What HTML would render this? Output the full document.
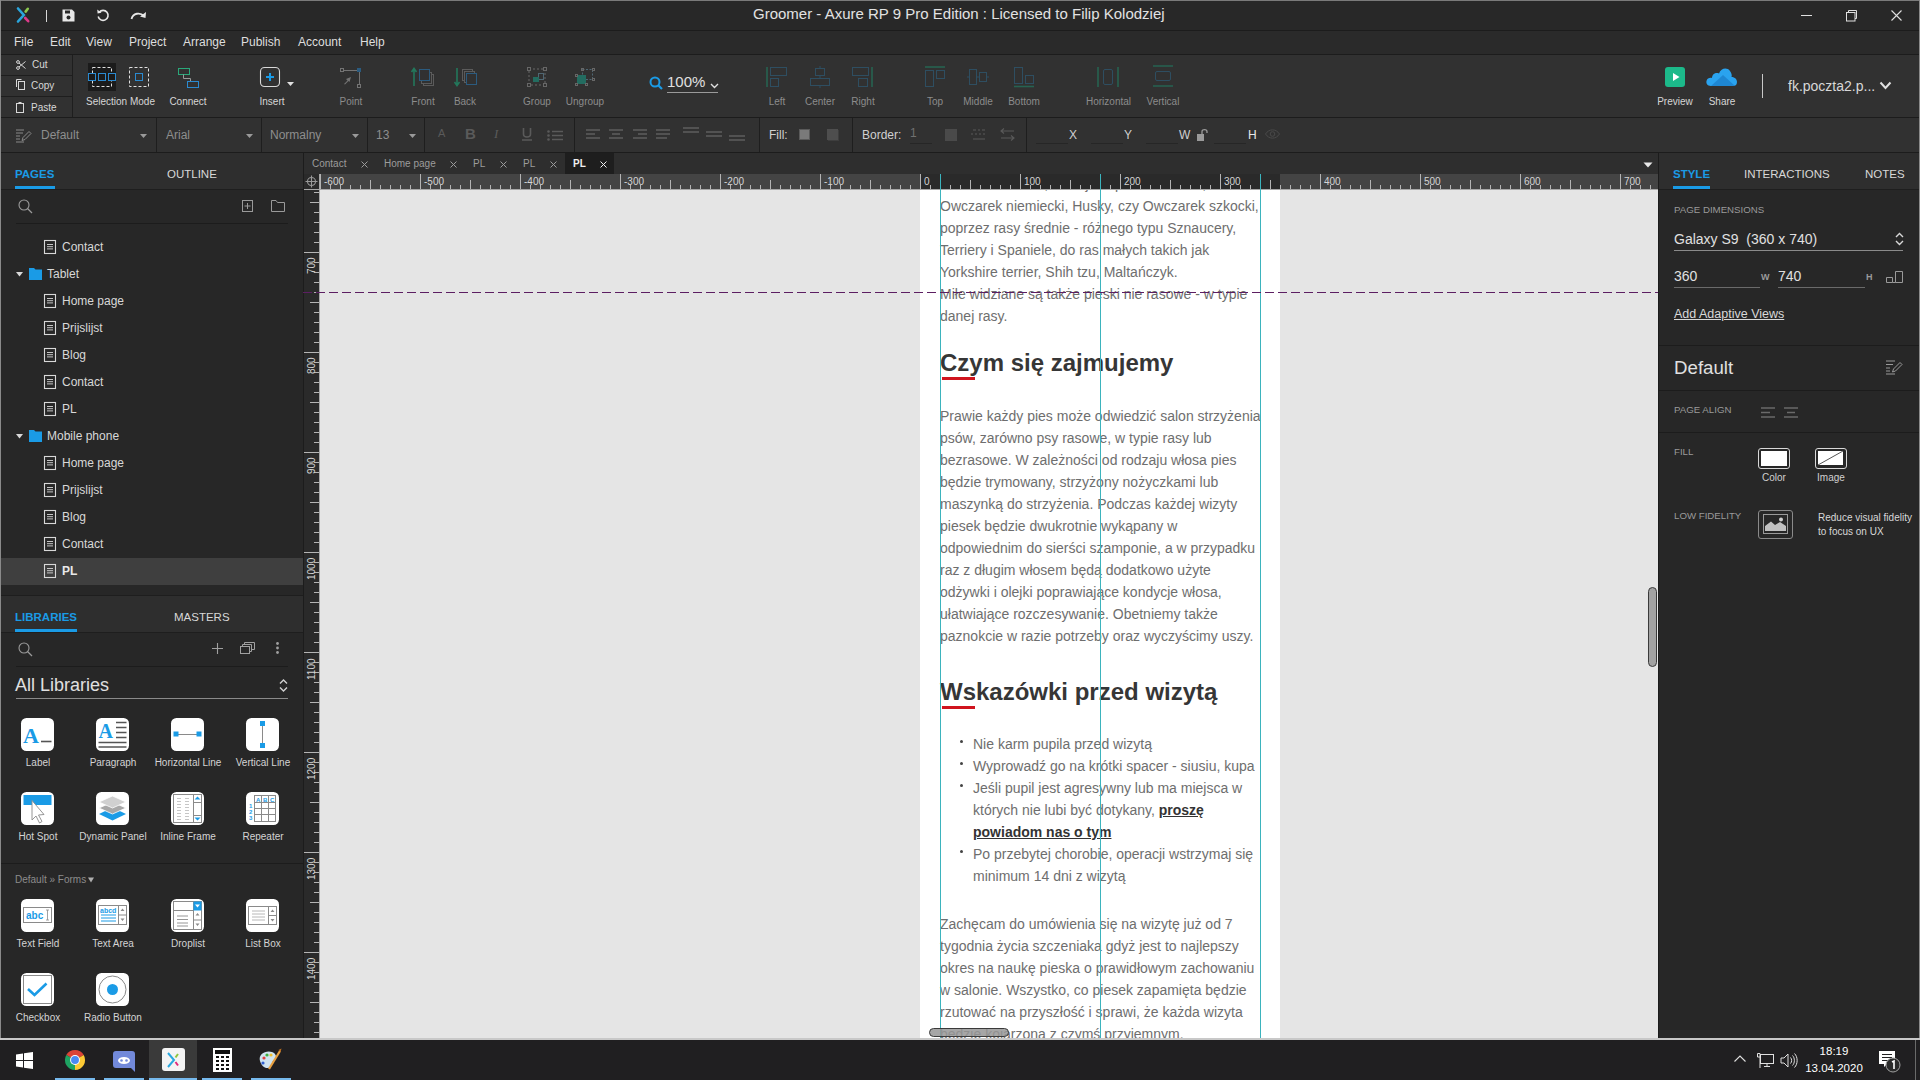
<!DOCTYPE html>
<html><head><meta charset="utf-8">
<style>
*{box-sizing:border-box;margin:0;padding:0}
html,body{width:1920px;height:1080px;overflow:hidden;background:#272727;font-family:"Liberation Sans",sans-serif;color:#d8d8d8}
.a{position:absolute}
.t{position:absolute;white-space:nowrap;line-height:1}
svg{position:absolute;overflow:visible}
</style></head><body>
<!-- window borders -->
<div class="a" style="left:0;top:0;width:1920px;height:1px;background:#7a7a7a"></div>
<div class="a" style="left:0;top:0;width:1px;height:1040px;background:#8a8a8a"></div>
<div class="a" style="left:1919px;top:0;width:1px;height:1040px;background:#8a8a8a"></div>
<!-- title bar -->
<div class="a" style="left:1px;top:1px;width:1918px;height:29px;background:#282828"></div>
<div class="a" style="left:1px;top:30px;width:1918px;height:1px;background:#1c1c1c"></div>
<!-- menu bar -->
<div class="a" style="left:1px;top:31px;width:1918px;height:23px;background:#2a2a2a"></div>
<div class="a" style="left:1px;top:54px;width:1918px;height:1px;background:#1c1c1c"></div>
<!-- toolbar -->
<div class="a" style="left:1px;top:55px;width:1918px;height:62px;background:#313131"></div>
<div class="a" style="left:1px;top:117px;width:1918px;height:1px;background:#1c1c1c"></div>
<!-- format bar -->
<div class="a" style="left:1px;top:118px;width:1918px;height:34px;background:#313131"></div>
<div class="a" style="left:1px;top:152px;width:1918px;height:1px;background:#1c1c1c"></div>
<!-- left panel -->
<div class="a" style="left:1px;top:153px;width:302px;height:885px;background:#272727"></div>
<div class="a" style="left:303px;top:153px;width:1px;height:885px;background:#1c1c1c"></div>
<!-- right panel -->
<div class="a" style="left:1658px;top:153px;width:1px;height:885px;background:#1c1c1c"></div>
<div class="a" style="left:1659px;top:153px;width:260px;height:885px;background:#272727"></div>
<!-- canvas region -->
<div class="a" style="left:304px;top:153px;width:1354px;height:21px;background:#2e2e2e"></div>
<div class="a" style="left:320px;top:190px;width:1338px;height:848px;background:#e5e5e5"></div>
<div class="a" style="left:920px;top:190px;width:360px;height:848px;background:#ffffff"></div>
<!-- bottom window border -->
<div class="a" style="left:0;top:1038px;width:1920px;height:2px;background:#c8c8c8"></div>
<!-- taskbar -->
<div class="a" style="left:0;top:1040px;width:1920px;height:40px;background:#201f21"></div>

<!-- ===== TITLE BAR ===== -->
<svg style="left:0px;top:0px" width="40" height="30" viewBox="0 0 40 30"><path d="M18 8.5 L23.8 15 L18 21.5" stroke="#2aa5dc" stroke-width="2.6" fill="none" stroke-linecap="round"/><path d="M25.6 11.6 L27.8 8.8" stroke="#8cc850" stroke-width="2.6" stroke-linecap="round"/><path d="M25.2 18 L28.2 21.2" stroke="#dc3a8a" stroke-width="2.6" stroke-linecap="round"/></svg>
<div class="a" style="left:46px;top:10px;width:1px;height:12px;background:#d8d8d8"></div>
<svg style="left:62px;top:9px" width="13" height="13" viewBox="0 0 13 13">
 <path d="M0.5 0.5 H10 L12.5 3 V12.5 H0.5 Z" fill="#e8e8e8"/>
 <rect x="3" y="1.5" width="5" height="3" fill="#282828"/>
 <circle cx="6.5" cy="8.5" r="2" fill="#282828"/>
</svg>
<svg style="left:96px;top:8px" width="14" height="14" viewBox="0 0 14 14">
 <path d="M3.2 4.2 A5 5 0 1 1 2.2 8.5" stroke="#e8e8e8" stroke-width="1.6" fill="none"/>
 <path d="M1.2 1.5 L1.6 5.5 L5.5 4.8 Z" fill="#e8e8e8"/>
</svg>
<svg style="left:130px;top:9px" width="17" height="12" viewBox="0 0 17 12">
 <path d="M1.5 10 C3 4, 10 3, 14 7" stroke="#e8e8e8" stroke-width="1.8" fill="none"/>
 <path d="M16 3 L15.5 9 L10 7.5 Z" fill="#e8e8e8"/>
</svg>
<div class="t" style="left:753px;top:6px;font-size:15px;line-height:16px;color:#e2e2e2">Groomer - Axure RP 9 Pro Edition : Licensed to Filip Kolodziej</div>
<div class="a" style="left:1801px;top:15px;width:11px;height:1px;background:#e0e0e0"></div>
<svg style="left:1845px;top:9px" width="13" height="13" viewBox="0 0 13 13"><rect x="1.5" y="3.5" width="8.5" height="8.5" stroke="#e0e0e0" stroke-width="1" fill="none"/><path d="M3.5 3.5 V1.5 H11.5 V9.5 H10" stroke="#e0e0e0" stroke-width="1" fill="none"/></svg>
<svg style="left:1891px;top:10px" width="11" height="11" viewBox="0 0 11 11">
 <path d="M0.5 0.5 L10.5 10.5 M10.5 0.5 L0.5 10.5" stroke="#e0e0e0" stroke-width="1.1"/>
</svg>
<!-- ===== MENU BAR ===== -->
<div class="t" style="left:14px;top:36px;font-size:12px;line-height:12px;color:#dedede">File</div>
<div class="t" style="left:50px;top:36px;font-size:12px;line-height:12px;color:#dedede">Edit</div>
<div class="t" style="left:86px;top:36px;font-size:12px;line-height:12px;color:#dedede">View</div>
<div class="t" style="left:129px;top:36px;font-size:12px;line-height:12px;color:#dedede">Project</div>
<div class="t" style="left:183px;top:36px;font-size:12px;line-height:12px;color:#dedede">Arrange</div>
<div class="t" style="left:241px;top:36px;font-size:12px;line-height:12px;color:#dedede">Publish</div>
<div class="t" style="left:298px;top:36px;font-size:12px;line-height:12px;color:#dedede">Account</div>
<div class="t" style="left:360px;top:36px;font-size:12px;line-height:12px;color:#dedede">Help</div>

<!-- ===== TOOLBAR ===== -->
<div class="a" style="left:72px;top:55px;width:1px;height:62px;background:#1e1e1e"></div>
<div class="a" style="left:1px;top:75px;width:71px;height:1px;background:#1e1e1e"></div>
<div class="a" style="left:1px;top:96px;width:71px;height:1px;background:#1e1e1e"></div>
<svg style="left:16px;top:60px" width="10" height="10" viewBox="0 0 10 10">
 <circle cx="2" cy="2" r="1.4" stroke="#d8d8d8" fill="none"/><circle cx="2" cy="8" r="1.4" stroke="#d8d8d8" fill="none"/>
 <path d="M3 3 L9.5 8.5 M3 7 L9.5 1.5" stroke="#d8d8d8" stroke-width="1"/>
</svg>
<div class="t" style="left:32px;top:60px;font-size:10px;line-height:10px;color:#d8d8d8">Cut</div>
<svg style="left:16px;top:79px" width="9" height="11" viewBox="0 0 9 11">
 <path d="M0.5 0.5 H5.5 M0.5 0.5 V8" stroke="#d8d8d8" fill="none"/><rect x="2.5" y="2.5" width="6" height="8" stroke="#d8d8d8" fill="none"/>
</svg>
<div class="t" style="left:31px;top:81px;font-size:10px;line-height:10px;color:#d8d8d8">Copy</div>
<svg style="left:16px;top:102px" width="9" height="11" viewBox="0 0 9 11">
 <rect x="0.5" y="1.5" width="7" height="9" stroke="#d8d8d8" fill="none"/><rect x="2.5" y="0" width="3" height="2" fill="#d8d8d8"/>
</svg>
<div class="t" style="left:31px;top:103px;font-size:10px;line-height:10px;color:#d8d8d8">Paste</div>

<div class="a" style="left:88px;top:63px;width:28px;height:28px;background:#1b1b1b"></div>
<svg style="left:88px;top:63px" width="28" height="28" viewBox="0 0 28 28">
 <rect x="4.5" y="4.5" width="19" height="19" stroke="#e0e0e0" stroke-dasharray="3 2" fill="none"/>
 <rect x="0.5" y="10.5" width="7" height="7" stroke="#2a8ad0" fill="#1b1b1b"/>
 <rect x="10.5" y="10.5" width="7" height="7" stroke="#2a8ad0" fill="#1b1b1b"/>
 <rect x="20.5" y="10.5" width="7" height="7" stroke="#2a8ad0" fill="#1b1b1b"/>
</svg>
<svg style="left:129px;top:67px" width="21" height="21" viewBox="0 0 21 21">
 <rect x="0.5" y="0.5" width="19" height="19" stroke="#e0e0e0" stroke-dasharray="3 2" fill="none"/>
 <rect x="6.5" y="6.5" width="7" height="7" stroke="#2a8ad0" fill="none"/>
</svg>
<svg style="left:178px;top:67px" width="21" height="21" viewBox="0 0 21 21">
 <rect x="0.5" y="1.5" width="11" height="6" stroke="#2aa87a" fill="none"/>
 <path d="M5.5 7.5 V11.5 H12.5 V14.5" stroke="#9a9a9a" fill="none"/>
 <rect x="9.5" y="14.5" width="11" height="6" stroke="#2a8ad0" fill="none"/>
</svg>
<svg style="left:259px;top:66px" width="37" height="22" viewBox="0 0 37 22">
 <rect x="1.5" y="1.5" width="19" height="19" rx="4" stroke="#d8d8d8" stroke-width="1.1" fill="none"/>
 <path d="M11 7 V15 M7 11 H15" stroke="#1a9be6" stroke-width="2"/>
 <path d="M28 16 H35 L31.5 20 Z" fill="#e0e0e0"/>
</svg>
<svg style="left:340px;top:67px;opacity:0.75" width="22" height="21" viewBox="0 0 22 21">
 <rect x="0.5" y="1.5" width="3" height="3" stroke="#8a8a8a" fill="none"/>
 <path d="M3.5 3.5 H17" stroke="#8a8a8a"/>
 <rect x="17" y="1" width="4" height="4" fill="#2a6a9a"/>
 <path d="M19.5 5 V17" stroke="#8a8a8a"/>
 <rect x="17.5" y="17.5" width="3" height="3" stroke="#8a8a8a" fill="none"/>
 <path d="M4 17 L7.5 13.5 L6 12 L11 10 L9.5 15 L8.5 14 L5 17.5 Z" fill="#8a8a8a"/>
</svg>
<svg style="left:411px;top:67px;opacity:0.75" width="24" height="20" viewBox="0 0 24 20">
 <path d="M3 19 V2 M0.5 5 L3 1.5 L5.5 5" stroke="#1f8f6a" stroke-width="1.6" fill="none"/>
 <rect x="12.5" y="7.5" width="10" height="11" stroke="#6a6a6a" fill="none"/>
 <rect x="10.5" y="5.5" width="10" height="11" stroke="#6a6a6a" fill="#313131"/>
 <rect x="8.5" y="2.5" width="10" height="11" stroke="#2a6a9a" fill="#313131"/>
</svg>
<svg style="left:454px;top:67px;opacity:0.75" width="24" height="20" viewBox="0 0 24 20">
 <path d="M3 1 V18 M0.5 15 L3 18.5 L5.5 15" stroke="#1f8f6a" stroke-width="1.6" fill="none"/>
 <rect x="8.5" y="2.5" width="10" height="11" stroke="#6a6a6a" fill="none"/>
 <rect x="10.5" y="4.5" width="10" height="11" stroke="#6a6a6a" fill="#313131"/>
 <rect x="12.5" y="6.5" width="10" height="11" stroke="#2a6a9a" fill="#313131"/>
</svg>
<svg style="left:527px;top:67px;opacity:0.75" width="21" height="20" viewBox="0 0 21 20">
 <rect x="2" y="2" width="16" height="16" stroke="#7a7a7a" stroke-dasharray="2 2" fill="none"/>
 <rect x="0.5" y="0.5" width="3" height="3" stroke="#7a7a7a" fill="#313131"/><rect x="16.5" y="0.5" width="3" height="3" stroke="#7a7a7a" fill="#313131"/>
 <rect x="0.5" y="16.5" width="3" height="3" stroke="#7a7a7a" fill="#313131"/><rect x="16.5" y="16.5" width="3" height="3" stroke="#7a7a7a" fill="#313131"/>
 <rect x="11.5" y="6.5" width="5" height="6" stroke="#5a7a8a" fill="none"/>
 <rect x="6" y="10" width="6" height="5" fill="#1f8070"/>
</svg>
<svg style="left:575px;top:67px;opacity:0.75" width="21" height="20" viewBox="0 0 21 20">
 <rect x="7.5" y="2.5" width="10" height="10" stroke="#5a7a8a" stroke-dasharray="2 1.5" fill="none"/>
 <rect x="6.5" y="1.5" width="2" height="2" stroke="#7a7a7a" fill="none"/><rect x="17.5" y="1.5" width="2" height="2" stroke="#7a7a7a" fill="none"/><rect x="17.5" y="11.5" width="2" height="2" stroke="#7a7a7a" fill="none"/>
 <rect x="2" y="8" width="9" height="9" fill="#1f8070"/>
 <rect x="0.5" y="7.5" width="2" height="2" stroke="#7a7a7a" fill="none"/><rect x="0.5" y="16.5" width="2" height="2" stroke="#7a7a7a" fill="none"/><rect x="10.5" y="16.5" width="2" height="2" stroke="#7a7a7a" fill="none"/>
</svg>
<!-- zoom -->
<svg style="left:649px;top:76px" width="14" height="14" viewBox="0 0 14 14">
 <circle cx="6" cy="6" r="4.5" stroke="#1a9be6" stroke-width="2" fill="none"/>
 <path d="M9.5 9.5 L13 13" stroke="#1a9be6" stroke-width="2.2"/>
</svg>
<div class="t" style="left:667px;top:74px;font-size:15px;line-height:15px;color:#e0e0e0">100%</div>
<svg style="left:710px;top:83px" width="9" height="6" viewBox="0 0 9 6"><path d="M1 1 L4.5 4.5 L8 1" stroke="#e0e0e0" stroke-width="1.4" fill="none"/></svg>
<div class="a" style="left:667px;top:92px;width:51px;height:1px;background:#9a9a9a"></div>
<!-- align -->
<svg style="left:766px;top:66px;opacity:0.75" width="22" height="22" viewBox="0 0 22 22">
 <path d="M1 1 V21" stroke="#23745c" stroke-width="1.6"/>
 <rect x="4.5" y="1.5" width="16" height="8" stroke="#2d5872" fill="none"/>
 <rect x="4.5" y="12.5" width="8" height="8" stroke="#2d5872" fill="none"/>
</svg>
<svg style="left:809px;top:66px;opacity:0.75" width="22" height="22" viewBox="0 0 22 22">
 <path d="M11 0 V22" stroke="#2d5872"/>
 <rect x="6.5" y="2.5" width="9" height="7" stroke="#2d5872" fill="#313131"/>
 <rect x="1.5" y="12.5" width="19" height="7" stroke="#2d5872" fill="#313131"/>
</svg>
<svg style="left:851px;top:66px;opacity:0.75" width="22" height="22" viewBox="0 0 22 22">
 <path d="M21 1 V21" stroke="#23745c" stroke-width="1.6"/>
 <rect x="1.5" y="1.5" width="16" height="8" stroke="#2d5872" fill="none"/>
 <rect x="7.5" y="12.5" width="9" height="8" stroke="#2d5872" fill="none"/>
</svg>
<svg style="left:924px;top:66px;opacity:0.75" width="22" height="22" viewBox="0 0 22 22">
 <path d="M1 1 H21" stroke="#23745c" stroke-width="1.6"/>
 <rect x="1.5" y="4.5" width="8" height="16" stroke="#2d5872" fill="none"/>
 <rect x="12.5" y="4.5" width="8" height="8" stroke="#2d5872" fill="none"/>
</svg>
<svg style="left:967px;top:66px;opacity:0.75" width="22" height="22" viewBox="0 0 22 22">
 <path d="M0 11 H22" stroke="#2d5872"/>
 <rect x="2.5" y="3.5" width="7" height="15" stroke="#2d5872" fill="#313131"/>
 <rect x="12.5" y="6.5" width="7" height="9" stroke="#2d5872" fill="#313131"/>
</svg>
<svg style="left:1013px;top:66px;opacity:0.75" width="22" height="22" viewBox="0 0 22 22">
 <path d="M1 20.5 H21" stroke="#23745c" stroke-width="1.6"/>
 <rect x="1.5" y="1.5" width="8" height="16" stroke="#2d5872" fill="none"/>
 <rect x="12.5" y="9.5" width="8" height="8" stroke="#2d5872" fill="none"/>
</svg>
<svg style="left:1097px;top:66px;opacity:0.75" width="22" height="22" viewBox="0 0 22 22">
 <path d="M1 1 V21 M21 1 V21" stroke="#23745c" stroke-width="1.6"/>
 <rect x="6.5" y="3.5" width="9" height="15" rx="1.5" stroke="#2d5872" fill="none"/>
</svg>
<svg style="left:1152px;top:65px;opacity:0.75" width="22" height="22" viewBox="0 0 22 22">
 <path d="M1 1 H21 M1 21 H21" stroke="#23745c" stroke-width="1.6"/>
 <rect x="3.5" y="6.5" width="15" height="9" rx="1.5" stroke="#2d5872" fill="none"/>
</svg>
<!-- preview/share -->
<div class="a" style="left:1665px;top:67px;width:20px;height:20px;border-radius:3px;background:#1cb98a"></div>
<svg style="left:1670px;top:71px" width="12" height="12" viewBox="0 0 12 12"><path d="M3 2 L9.5 6 L3 10 Z" fill="#ffffff"/></svg>
<svg style="left:1706px;top:66px" width="32" height="22" viewBox="0 0 32 22">
 <path d="M5 20 C1 20 0 17 0.5 15 C1 12 4 11.5 6 12 C6 8 10 6 13 7.5 C15 2 21 1 24 5 C26 8 26 10 25.5 11 C29 11 31 13.5 31 16 C31 19 29 20 27 20 Z" fill="#2aa3ef"/>
 <path d="M5 20 L17 9 L29 20 Z" fill="#1a7ac8" opacity="0.7"/>
</svg>
<div class="a" style="left:1762px;top:74px;width:1px;height:24px;background:#c8c8c8"></div>
<div class="t" style="left:1788px;top:79px;font-size:14px;line-height:15px;color:#d8d8d8">fk.poczta2.p...</div>
<svg style="left:1879px;top:81px" width="13" height="9" viewBox="0 0 13 9"><path d="M1.5 1.5 L6.5 7 L11.5 1.5" stroke="#e0e0e0" stroke-width="2" fill="none"/></svg>
<div class="t" style="left:60.5px;width:120px;text-align:center;top:96px;font-size:10px;line-height:11px;color:#d6d6d6">Selection Mode</div>
<div class="t" style="left:128px;width:120px;text-align:center;top:96px;font-size:10px;line-height:11px;color:#d6d6d6">Connect</div>
<div class="t" style="left:212px;width:120px;text-align:center;top:96px;font-size:10px;line-height:11px;color:#d6d6d6">Insert</div>
<div class="t" style="left:291px;width:120px;text-align:center;top:96px;font-size:10px;line-height:11px;color:#8c8c8c">Point</div>
<div class="t" style="left:363px;width:120px;text-align:center;top:96px;font-size:10px;line-height:11px;color:#8c8c8c">Front</div>
<div class="t" style="left:405px;width:120px;text-align:center;top:96px;font-size:10px;line-height:11px;color:#8c8c8c">Back</div>
<div class="t" style="left:477px;width:120px;text-align:center;top:96px;font-size:10px;line-height:11px;color:#8c8c8c">Group</div>
<div class="t" style="left:525px;width:120px;text-align:center;top:96px;font-size:10px;line-height:11px;color:#8c8c8c">Ungroup</div>
<div class="t" style="left:717px;width:120px;text-align:center;top:96px;font-size:10px;line-height:11px;color:#8c8c8c">Left</div>
<div class="t" style="left:760px;width:120px;text-align:center;top:96px;font-size:10px;line-height:11px;color:#8c8c8c">Center</div>
<div class="t" style="left:803px;width:120px;text-align:center;top:96px;font-size:10px;line-height:11px;color:#8c8c8c">Right</div>
<div class="t" style="left:875px;width:120px;text-align:center;top:96px;font-size:10px;line-height:11px;color:#8c8c8c">Top</div>
<div class="t" style="left:918px;width:120px;text-align:center;top:96px;font-size:10px;line-height:11px;color:#8c8c8c">Middle</div>
<div class="t" style="left:964px;width:120px;text-align:center;top:96px;font-size:10px;line-height:11px;color:#8c8c8c">Bottom</div>
<div class="t" style="left:1048.5px;width:120px;text-align:center;top:96px;font-size:10px;line-height:11px;color:#8c8c8c">Horizontal</div>
<div class="t" style="left:1103px;width:120px;text-align:center;top:96px;font-size:10px;line-height:11px;color:#8c8c8c">Vertical</div>
<div class="t" style="left:1615px;width:120px;text-align:center;top:96px;font-size:10px;line-height:11px;color:#d6d6d6">Preview</div>
<div class="t" style="left:1662px;width:120px;text-align:center;top:96px;font-size:10px;line-height:11px;color:#d6d6d6">Share</div>

<!-- ===== FORMAT BAR ===== -->
<svg style="left:16px;top:129px" width="16" height="14" viewBox="0 0 16 14">
 <path d="M0 1 H8 M0 4 H7 M0 7 H4 M0 10 H4 M0 13 H8" stroke="#8a8a8a" stroke-width="1.1"/>
 <path d="M6 11.5 L7 8.5 L13 2.5 L15 4.5 L9 10.5 Z" stroke="#8a8a8a" stroke-width="1" fill="none"/>
</svg>
<div class="t" style="left:41px;top:129px;font-size:12px;line-height:13px;color:#8e8e8e">Default</div>
<svg style="left:140px;top:134px" width="7" height="4" viewBox="0 0 7 4"><path d="M0 0 H7 L3.5 4 Z" fill="#9a9a9a"/></svg>
<div class="a" style="left:156px;top:118px;width:1px;height:34px;background:#1e1e1e"></div>
<div class="t" style="left:166px;top:129px;font-size:12px;line-height:13px;color:#8e8e8e">Arial</div>
<svg style="left:246px;top:134px" width="7" height="4" viewBox="0 0 7 4"><path d="M0 0 H7 L3.5 4 Z" fill="#9a9a9a"/></svg>
<div class="a" style="left:261px;top:118px;width:1px;height:34px;background:#1e1e1e"></div>
<div class="t" style="left:270px;top:129px;font-size:12px;line-height:13px;color:#8e8e8e">Normalny</div>
<svg style="left:352px;top:134px" width="7" height="4" viewBox="0 0 7 4"><path d="M0 0 H7 L3.5 4 Z" fill="#9a9a9a"/></svg>
<div class="a" style="left:367px;top:118px;width:1px;height:34px;background:#1e1e1e"></div>
<div class="t" style="left:376px;top:129px;font-size:12px;line-height:13px;color:#8e8e8e">13</div>
<svg style="left:409px;top:134px" width="7" height="4" viewBox="0 0 7 4"><path d="M0 0 H7 L3.5 4 Z" fill="#9a9a9a"/></svg>
<div class="a" style="left:424px;top:118px;width:1px;height:34px;background:#1e1e1e"></div>
<div class="t" style="left:438px;top:127px;font-size:11px;line-height:12px;color:#5a5a5a">A</div>
<div class="t" style="left:465px;top:126px;font-size:15px;line-height:15px;font-weight:bold;color:#5a5a5a">B</div>
<div class="t" style="left:494px;top:127px;font-size:13px;line-height:14px;font-style:italic;font-family:'Liberation Serif',serif;color:#5a5a5a">I</div>
<svg style="left:522px;top:128px" width="10" height="13" viewBox="0 0 10 13"><path d="M1.5 0 V6 C1.5 10 8.5 10 8.5 6 V0 M0 12 H10" stroke="#5a5a5a" stroke-width="1.6" fill="none"/></svg>
<svg style="left:547px;top:130px" width="16" height="11" viewBox="0 0 16 11">
 <circle cx="1.5" cy="1.5" r="1.3" fill="#5a5a5a"/><circle cx="1.5" cy="5.5" r="1.3" fill="#5a5a5a"/><circle cx="1.5" cy="9.5" r="1.3" fill="#5a5a5a"/>
 <path d="M5 1.5 H16 M5 5.5 H16 M5 9.5 H16" stroke="#5a5a5a" stroke-width="1.6"/>
</svg>
<div class="a" style="left:574px;top:118px;width:1px;height:34px;background:#1e1e1e"></div>
<svg style="left:586px;top:129px" width="15" height="10" viewBox="0 0 15 10"><path d="M0 1 H14 M0 5 H9 M0 9 H14" stroke="#5e5e5e" stroke-width="1.6"/></svg>
<svg style="left:609px;top:129px" width="15" height="10" viewBox="0 0 15 10"><path d="M0 1 H14 M3 5 H11 M0 9 H14" stroke="#5e5e5e" stroke-width="1.6"/></svg>
<svg style="left:633px;top:129px" width="15" height="10" viewBox="0 0 15 10"><path d="M0 1 H14 M5 5 H14 M0 9 H14" stroke="#5e5e5e" stroke-width="1.6"/></svg>
<svg style="left:656px;top:129px" width="15" height="10" viewBox="0 0 15 10"><path d="M0 1 H14 M0 5 H14 M0 9 H11" stroke="#5e5e5e" stroke-width="1.6"/></svg>
<svg style="left:683px;top:127px" width="16" height="6" viewBox="0 0 16 6"><path d="M0 1 H16 M0 5 H16" stroke="#5e5e5e" stroke-width="1.6"/></svg>
<svg style="left:706px;top:131px" width="16" height="6" viewBox="0 0 16 6"><path d="M0 1 H16 M0 5 H16" stroke="#5e5e5e" stroke-width="1.6"/></svg>
<svg style="left:729px;top:135px" width="16" height="6" viewBox="0 0 16 6"><path d="M0 1 H16 M0 5 H16" stroke="#5e5e5e" stroke-width="1.6"/></svg>
<div class="a" style="left:759px;top:118px;width:1px;height:34px;background:#1e1e1e"></div>
<div class="t" style="left:769px;top:129px;font-size:12px;line-height:13px;color:#d0d0d0">Fill:</div>
<div class="a" style="left:799px;top:129px;width:11px;height:11px;background:#7a7a7a;border:1px solid #5a5a5a"></div>
<div class="a" style="left:827px;top:129px;width:11px;height:11px;background:#4e4e4e;box-shadow:1px 1px 0 #3e3e3e"></div>
<div class="a" style="left:852px;top:118px;width:1px;height:34px;background:#1e1e1e"></div>
<div class="t" style="left:862px;top:129px;font-size:12px;line-height:13px;color:#d0d0d0">Border:</div>
<div class="t" style="left:910px;top:127px;font-size:12px;line-height:13px;color:#707070">1</div>
<div class="a" style="left:910px;top:143px;width:22px;height:1px;background:#262626"></div>
<div class="a" style="left:945px;top:129px;width:12px;height:12px;background:#4a4a4a"></div>
<svg style="left:971px;top:129px" width="16" height="11" viewBox="0 0 16 11"><path d="M2 1 H5 M7 1 H9 M11 1 H14 M0 5 H2 M4 5 H6 M8 5 H10 M12 5 H14 M2 10 H14" stroke="#5a5a5a" stroke-width="1.1"/></svg>
<svg style="left:1000px;top:128px" width="15" height="13" viewBox="0 0 15 13"><path d="M14 3 H1 M4 0.5 L1 3 L4 5.5 M1 10 H14 M11 7.5 L14 10 L11 12.5" stroke="#5a5a5a" stroke-width="1.1" fill="none"/></svg>
<div class="a" style="left:1026px;top:118px;width:1px;height:34px;background:#1e1e1e"></div>
<div class="a" style="left:1036px;top:143px;width:32px;height:1px;background:#262626"></div>
<div class="t" style="left:1069px;top:129px;font-size:12px;line-height:12px;color:#cfcfcf">X</div>
<div class="a" style="left:1091px;top:143px;width:32px;height:1px;background:#262626"></div>
<div class="t" style="left:1124px;top:129px;font-size:12px;line-height:12px;color:#cfcfcf">Y</div>
<div class="a" style="left:1146px;top:143px;width:32px;height:1px;background:#262626"></div>
<div class="t" style="left:1179px;top:129px;font-size:12px;line-height:12px;color:#cfcfcf">W</div>
<svg style="left:1197px;top:129px" width="11" height="12" viewBox="0 0 11 12"><rect x="0" y="5" width="7" height="7" fill="#9a9a9a"/><path d="M5 5 V2.5 C5 0 10 0 10 2.5 V4" stroke="#9a9a9a" stroke-width="1.3" fill="none"/></svg>
<div class="a" style="left:1214px;top:143px;width:32px;height:1px;background:#262626"></div>
<div class="t" style="left:1248px;top:129px;font-size:12px;line-height:12px;color:#e8e8e8">H</div>
<svg style="left:1265px;top:129px" width="15" height="10" viewBox="0 0 15 10"><path d="M0.5 5 C4 -0.5 11 -0.5 14.5 5 C11 10.5 4 10.5 0.5 5 Z" stroke="#4a4a4a" fill="none"/><circle cx="7.5" cy="5" r="2.3" stroke="#4a4a4a" fill="none"/></svg>
<!-- ===== LEFT PANEL ===== -->
<div class="a" style="left:1px;top:153px;width:302px;height:36px;background:#2e2e2e"></div>
<div class="a" style="left:1px;top:189px;width:302px;height:1px;background:#1e1e1e"></div>
<div class="t" style="left:15px;top:167px;font-size:11.5px;line-height:14px;font-weight:bold;color:#1a9be6">PAGES</div>
<div class="a" style="left:15px;top:186px;width:40px;height:3px;background:#1a9be6"></div>
<div class="t" style="left:167px;top:167px;font-size:11.5px;line-height:14px;color:#d8d8d8">OUTLINE</div>
<svg style="left:18px;top:199px" width="15" height="15" viewBox="0 0 15 15"><circle cx="6" cy="6" r="5" stroke="#9a9a9a" stroke-width="1.1" fill="none"/><path d="M9.5 9.5 L14 14" stroke="#9a9a9a" stroke-width="1.2"/></svg>
<svg style="left:242px;top:200px" width="11" height="12" viewBox="0 0 11 12"><rect x="0.5" y="0.5" width="10" height="11" stroke="#9a9a9a" fill="none"/><path d="M5.5 3 V9 M2.5 6 H8.5" stroke="#9a9a9a"/></svg>
<svg style="left:271px;top:200px" width="14" height="12" viewBox="0 0 14 12"><path d="M0.5 0.5 H5 L6.5 2.5 H13.5 V11.5 H0.5 Z" stroke="#9a9a9a" fill="none"/></svg>
<div class="a" style="left:16px;top:223px;width:272px;height:1px;background:#1c1c1c"></div>
<svg style="left:44px;top:240px" width="12" height="14" viewBox="0 0 12 14"><rect x="0.5" y="0.5" width="11" height="13" stroke="#d8d8d8" stroke-width="1.1" fill="none"/><path d="M3 4.5 H9 M3 6.7 H9 M3 8.9 H9" stroke="#d8d8d8" stroke-width="0.9"/></svg>
<div class="t" style="left:62px;top:240px;font-size:12px;line-height:14px;color:#d8d8d8;">Contact</div>
<svg style="left:16px;top:267px" width="27" height="14" viewBox="0 0 27 14"><path d="M0 5 H7 L3.5 9.5 Z" fill="#d8d8d8"/><path d="M13 1 H18 L19.5 2.5 H26 V13 H13 Z" fill="#1a9be6"/></svg>
<div class="t" style="left:47px;top:267px;font-size:12px;line-height:14px;color:#d8d8d8;">Tablet</div>
<svg style="left:44px;top:294px" width="12" height="14" viewBox="0 0 12 14"><rect x="0.5" y="0.5" width="11" height="13" stroke="#d8d8d8" stroke-width="1.1" fill="none"/><path d="M3 4.5 H9 M3 6.7 H9 M3 8.9 H9" stroke="#d8d8d8" stroke-width="0.9"/></svg>
<div class="t" style="left:62px;top:294px;font-size:12px;line-height:14px;color:#d8d8d8;">Home page</div>
<svg style="left:44px;top:321px" width="12" height="14" viewBox="0 0 12 14"><rect x="0.5" y="0.5" width="11" height="13" stroke="#d8d8d8" stroke-width="1.1" fill="none"/><path d="M3 4.5 H9 M3 6.7 H9 M3 8.9 H9" stroke="#d8d8d8" stroke-width="0.9"/></svg>
<div class="t" style="left:62px;top:321px;font-size:12px;line-height:14px;color:#d8d8d8;">Prijslijst</div>
<svg style="left:44px;top:348px" width="12" height="14" viewBox="0 0 12 14"><rect x="0.5" y="0.5" width="11" height="13" stroke="#d8d8d8" stroke-width="1.1" fill="none"/><path d="M3 4.5 H9 M3 6.7 H9 M3 8.9 H9" stroke="#d8d8d8" stroke-width="0.9"/></svg>
<div class="t" style="left:62px;top:348px;font-size:12px;line-height:14px;color:#d8d8d8;">Blog</div>
<svg style="left:44px;top:375px" width="12" height="14" viewBox="0 0 12 14"><rect x="0.5" y="0.5" width="11" height="13" stroke="#d8d8d8" stroke-width="1.1" fill="none"/><path d="M3 4.5 H9 M3 6.7 H9 M3 8.9 H9" stroke="#d8d8d8" stroke-width="0.9"/></svg>
<div class="t" style="left:62px;top:375px;font-size:12px;line-height:14px;color:#d8d8d8;">Contact</div>
<svg style="left:44px;top:402px" width="12" height="14" viewBox="0 0 12 14"><rect x="0.5" y="0.5" width="11" height="13" stroke="#d8d8d8" stroke-width="1.1" fill="none"/><path d="M3 4.5 H9 M3 6.7 H9 M3 8.9 H9" stroke="#d8d8d8" stroke-width="0.9"/></svg>
<div class="t" style="left:62px;top:402px;font-size:12px;line-height:14px;color:#d8d8d8;">PL</div>
<svg style="left:16px;top:429px" width="27" height="14" viewBox="0 0 27 14"><path d="M0 5 H7 L3.5 9.5 Z" fill="#d8d8d8"/><path d="M13 1 H18 L19.5 2.5 H26 V13 H13 Z" fill="#1a9be6"/></svg>
<div class="t" style="left:47px;top:429px;font-size:12px;line-height:14px;color:#d8d8d8;">Mobile phone</div>
<svg style="left:44px;top:456px" width="12" height="14" viewBox="0 0 12 14"><rect x="0.5" y="0.5" width="11" height="13" stroke="#d8d8d8" stroke-width="1.1" fill="none"/><path d="M3 4.5 H9 M3 6.7 H9 M3 8.9 H9" stroke="#d8d8d8" stroke-width="0.9"/></svg>
<div class="t" style="left:62px;top:456px;font-size:12px;line-height:14px;color:#d8d8d8;">Home page</div>
<svg style="left:44px;top:483px" width="12" height="14" viewBox="0 0 12 14"><rect x="0.5" y="0.5" width="11" height="13" stroke="#d8d8d8" stroke-width="1.1" fill="none"/><path d="M3 4.5 H9 M3 6.7 H9 M3 8.9 H9" stroke="#d8d8d8" stroke-width="0.9"/></svg>
<div class="t" style="left:62px;top:483px;font-size:12px;line-height:14px;color:#d8d8d8;">Prijslijst</div>
<svg style="left:44px;top:510px" width="12" height="14" viewBox="0 0 12 14"><rect x="0.5" y="0.5" width="11" height="13" stroke="#d8d8d8" stroke-width="1.1" fill="none"/><path d="M3 4.5 H9 M3 6.7 H9 M3 8.9 H9" stroke="#d8d8d8" stroke-width="0.9"/></svg>
<div class="t" style="left:62px;top:510px;font-size:12px;line-height:14px;color:#d8d8d8;">Blog</div>
<svg style="left:44px;top:537px" width="12" height="14" viewBox="0 0 12 14"><rect x="0.5" y="0.5" width="11" height="13" stroke="#d8d8d8" stroke-width="1.1" fill="none"/><path d="M3 4.5 H9 M3 6.7 H9 M3 8.9 H9" stroke="#d8d8d8" stroke-width="0.9"/></svg>
<div class="t" style="left:62px;top:537px;font-size:12px;line-height:14px;color:#d8d8d8;">Contact</div>
<div class="a" style="left:1px;top:558px;width:302px;height:27px;background:#3f3f3f"></div>
<svg style="left:44px;top:564px" width="12" height="14" viewBox="0 0 12 14"><rect x="0.5" y="0.5" width="11" height="13" stroke="#d8d8d8" stroke-width="1.1" fill="none"/><path d="M3 4.5 H9 M3 6.7 H9 M3 8.9 H9" stroke="#d8d8d8" stroke-width="0.9"/></svg>
<div class="t" style="left:62px;top:564px;font-size:12px;line-height:14px;color:#d8d8d8;font-weight:bold;color:#e8e8e8">PL</div>
<div class="a" style="left:1px;top:595px;width:302px;height:1px;background:#1e1e1e"></div>
<div class="a" style="left:1px;top:596px;width:302px;height:36px;background:#2e2e2e"></div>
<div class="a" style="left:1px;top:632px;width:302px;height:1px;background:#1e1e1e"></div>
<div class="t" style="left:15px;top:610px;font-size:11.5px;line-height:14px;font-weight:bold;color:#1a9be6">LIBRARIES</div>
<div class="a" style="left:15px;top:629px;width:62px;height:3px;background:#1a9be6"></div>
<div class="t" style="left:174px;top:610px;font-size:11.5px;line-height:14px;color:#d8d8d8">MASTERS</div>
<svg style="left:18px;top:642px" width="15" height="15" viewBox="0 0 15 15"><circle cx="6" cy="6" r="5" stroke="#9a9a9a" stroke-width="1.1" fill="none"/><path d="M9.5 9.5 L14 14" stroke="#9a9a9a" stroke-width="1.2"/></svg>
<svg style="left:212px;top:643px" width="11" height="11" viewBox="0 0 11 11"><path d="M5.5 0 V11 M0 5.5 H11" stroke="#a0a0a0" stroke-width="1.1"/></svg>
<svg style="left:240px;top:642px" width="15" height="12" viewBox="0 0 15 12"><rect x="0.5" y="4.5" width="9" height="7" stroke="#a0a0a0" fill="#272727"/><path d="M2.5 4.5 V2.5 H11.5 V9.5 H9.5 M4.5 2.5 V0.5 H14.5 V7.5 H11.5" stroke="#a0a0a0" fill="none"/></svg>
<svg style="left:276px;top:642px" width="3" height="12" viewBox="0 0 3 12"><circle cx="1.5" cy="1.5" r="1.4" fill="#a0a0a0"/><circle cx="1.5" cy="6" r="1.4" fill="#a0a0a0"/><circle cx="1.5" cy="10.5" r="1.4" fill="#a0a0a0"/></svg>
<div class="a" style="left:16px;top:666px;width:272px;height:1px;background:#1c1c1c"></div>
<div class="t" style="left:15px;top:675px;font-size:18px;line-height:20px;color:#e0e0e0">All Libraries</div>
<svg style="left:279px;top:679px" width="9" height="13" viewBox="0 0 9 13"><path d="M1 4.5 L4.5 1 L8 4.5 M1 8.5 L4.5 12 L8 8.5" stroke="#d0d0d0" stroke-width="1.4" fill="none"/></svg>
<div class="a" style="left:16px;top:698px;width:272px;height:1px;background:#8a8a8a"></div>
<svg style="left:21px;top:718px" width="33" height="33" viewBox="0 0 33 33"><rect x="0" y="0" width="33" height="33" rx="5.5" fill="#ffffff"/><text x="2" y="25" font-family="Liberation Serif" font-weight="bold" font-size="22" fill="#1a9be6">A</text><path d="M20 23.5 H30.5" stroke="#555555" stroke-width="1.6"/></svg>
<div class="t" style="left:-12px;width:100px;text-align:center;top:757px;font-size:10px;line-height:12px;color:#d4d4d4">Label</div>
<svg style="left:96px;top:718px" width="33" height="33" viewBox="0 0 33 33"><rect x="0" y="0" width="33" height="33" rx="5.5" fill="#ffffff"/><text x="2.5" y="20" font-family="Liberation Serif" font-weight="bold" font-size="20" fill="#1a9be6">A</text><path d="M20 4.5 H30.5 M20 9.5 H30.5 M20 14.5 H30.5 M20 19.5 H30.5 M2.5 24.5 H30.5 M2.5 29 H30.5" stroke="#555555" stroke-width="1.6"/></svg>
<div class="t" style="left:63px;width:100px;text-align:center;top:757px;font-size:10px;line-height:12px;color:#d4d4d4">Paragraph</div>
<svg style="left:171px;top:718px" width="33" height="33" viewBox="0 0 33 33"><rect x="0" y="0" width="33" height="33" rx="5.5" fill="#ffffff"/><path d="M7 16.5 H26" stroke="#8a8a8a" stroke-width="1"/><rect x="2.5" y="13.5" width="5" height="5" fill="#1a9be6"/><rect x="25.5" y="13.5" width="5" height="5" fill="#1a9be6"/></svg>
<div class="t" style="left:138px;width:100px;text-align:center;top:757px;font-size:10px;line-height:12px;color:#d4d4d4">Horizontal Line</div>
<svg style="left:246px;top:718px" width="33" height="33" viewBox="0 0 33 33"><rect x="0" y="0" width="33" height="33" rx="5.5" fill="#ffffff"/><path d="M16.5 7 V26" stroke="#8a8a8a" stroke-width="1"/><rect x="14" y="3" width="5" height="5" fill="#1a9be6"/><rect x="14" y="25" width="5" height="5" fill="#1a9be6"/></svg>
<div class="t" style="left:213px;width:100px;text-align:center;top:757px;font-size:10px;line-height:12px;color:#d4d4d4">Vertical Line</div>
<svg style="left:21px;top:792px" width="33" height="33" viewBox="0 0 33 33"><rect x="0" y="0" width="33" height="33" rx="5.5" fill="#ffffff"/><rect x="2.5" y="3" width="28" height="10" fill="#1a9be6"/><path d="M11 8.5 V28 L15 24 L18.5 31 L21 29.5 L17.5 23 L23 22.5 Z" fill="#ffffff" stroke="#8a8a8a" stroke-width="0.9"/></svg>
<div class="t" style="left:-12px;width:100px;text-align:center;top:831px;font-size:10px;line-height:12px;color:#d4d4d4">Hot Spot</div>
<svg style="left:96px;top:792px" width="33" height="33" viewBox="0 0 33 33"><rect x="0" y="0" width="33" height="33" rx="5.5" fill="#ffffff"/><path d="M3 22 L16.5 15.5 L30 22 L16.5 28.5 Z" fill="#1a9be6"/><path d="M3 16 L16.5 10 L30 16 L16.5 22 Z" fill="#a8a8a8" stroke="#ffffff" stroke-width="0.8"/><path d="M3 10 L16.5 4 L30 10 L16.5 16 Z" fill="#d0d0d0" stroke="#ffffff" stroke-width="0.8"/></svg>
<div class="t" style="left:63px;width:100px;text-align:center;top:831px;font-size:10px;line-height:12px;color:#d4d4d4">Dynamic Panel</div>
<svg style="left:171px;top:792px" width="33" height="33" viewBox="0 0 33 33"><rect x="0" y="0" width="33" height="33" rx="5.5" fill="#ffffff"/><rect x="2.5" y="2.5" width="28" height="28" stroke="#8a8a8a" fill="none"/><path d="M22.5 2.5 V30.5 M22.5 10.5 H30.5 M22.5 23.5 H30.5" stroke="#8a8a8a"/><path d="M6 6.5 H10 M14 6.5 H18 M6 9.5 H10 M14 9.5 H18 M6 12.5 H10 M14 12.5 H18 M6 15.5 H10 M14 15.5 H18 M6 18.5 H10 M14 18.5 H18 M6 21.5 H10 M14 21.5 H18 M6 24.5 H10 M14 24.5 H18 M6 27.5 H10 M14 27.5 H18" stroke="#c0c0c0" stroke-width="0.9"/><path d="M23.5 7.5 L26.5 4.5 L29.5 7.5 Z M23.5 25.5 L26.5 28.5 L29.5 25.5 Z" fill="#1a9be6"/></svg>
<div class="t" style="left:138px;width:100px;text-align:center;top:831px;font-size:10px;line-height:12px;color:#d4d4d4">Inline Frame</div>
<svg style="left:246px;top:792px" width="33" height="33" viewBox="0 0 33 33"><rect x="0" y="0" width="33" height="33" rx="5.5" fill="#ffffff"/><rect x="8.5" y="3.5" width="21" height="26" stroke="#8a8a8a" fill="none"/><path d="M15.5 3.5 V29.5 M22.5 3.5 V29.5 M8.5 10.5 H29.5 M8.5 16.5 H29.5 M8.5 22.5 H29.5" stroke="#8a8a8a"/><text x="10" y="9.5" font-family="Liberation Sans" font-weight="bold" font-size="6" fill="#1a9be6">A</text><text x="17" y="9.5" font-family="Liberation Sans" font-weight="bold" font-size="6" fill="#1a9be6">B</text><text x="24" y="9.5" font-family="Liberation Sans" font-weight="bold" font-size="6" fill="#1a9be6">C</text><text x="3" y="16" font-family="Liberation Sans" font-weight="bold" font-size="6" fill="#1a9be6">1</text><text x="3" y="22" font-family="Liberation Sans" font-weight="bold" font-size="6" fill="#1a9be6">2</text><text x="3" y="28" font-family="Liberation Sans" font-weight="bold" font-size="6" fill="#1a9be6">3</text></svg>
<div class="t" style="left:213px;width:100px;text-align:center;top:831px;font-size:10px;line-height:12px;color:#d4d4d4">Repeater</div>
<svg style="left:21px;top:899px" width="33" height="33" viewBox="0 0 33 33"><rect x="0" y="0" width="33" height="33" rx="5.5" fill="#ffffff"/><rect x="2.5" y="8.5" width="28" height="15" stroke="#8a8a8a" fill="none"/><text x="5" y="20" font-family="Liberation Sans" font-weight="bold" font-size="10" fill="#1a9be6">abc</text><path d="M26.5 11 V21 M25 11 H28 M25 21 H28" stroke="#8a8a8a" stroke-width="0.8"/></svg>
<div class="t" style="left:-12px;width:100px;text-align:center;top:938px;font-size:10px;line-height:12px;color:#d4d4d4">Text Field</div>
<svg style="left:96px;top:899px" width="33" height="33" viewBox="0 0 33 33"><rect x="0" y="0" width="33" height="33" rx="5.5" fill="#ffffff"/><rect x="2.5" y="6.5" width="28" height="19" stroke="#8a8a8a" fill="none"/><path d="M22.5 6.5 V25.5 M22.5 16 H30.5" stroke="#8a8a8a"/><text x="4" y="13.5" font-family="Liberation Sans" font-weight="bold" font-size="7" fill="#1a9be6">abcd</text><path d="M5 16 H20 M5 19 H20 M5 22 H20" stroke="#1a9be6" stroke-width="1"/><path d="M24.5 12 L26.5 9.5 L28.5 12 Z M24.5 19.5 L26.5 22 L28.5 19.5 Z" fill="#8a8a8a"/></svg>
<div class="t" style="left:63px;width:100px;text-align:center;top:938px;font-size:10px;line-height:12px;color:#d4d4d4">Text Area</div>
<svg style="left:171px;top:899px" width="33" height="33" viewBox="0 0 33 33"><rect x="0" y="0" width="33" height="33" rx="5.5" fill="#ffffff"/><rect x="2.5" y="2.5" width="28" height="28" stroke="#8a8a8a" fill="none"/><path d="M2.5 11.5 H22.5 M22.5 2.5 V30.5 M22.5 21 H30.5" stroke="#8a8a8a"/><rect x="22.5" y="2.5" width="8" height="9" fill="#1a9be6"/><path d="M24 5.5 L26.5 8.5 L29 5.5 Z" fill="#fff"/><path d="M6 17 H17 M6 20.5 H17 M6 24 H17 M6 27 H17" stroke="#8a8a8a" stroke-width="0.9"/><path d="M24.5 16.5 L26.5 14 L28.5 16.5 Z M24.5 24.5 L26.5 27 L28.5 24.5 Z" fill="#8a8a8a"/></svg>
<div class="t" style="left:138px;width:100px;text-align:center;top:938px;font-size:10px;line-height:12px;color:#d4d4d4">Droplist</div>
<svg style="left:246px;top:899px" width="33" height="33" viewBox="0 0 33 33"><rect x="0" y="0" width="33" height="33" rx="5.5" fill="#ffffff"/><rect x="2.5" y="7.5" width="28" height="18" stroke="#8a8a8a" fill="none"/><path d="M22.5 7.5 V25.5 M22.5 16.5 H30.5" stroke="#8a8a8a"/><path d="M6 12 H19 M6 15 H19 M6 18 H19 M6 21 H19" stroke="#b0b0b0" stroke-width="0.9"/><path d="M24.5 13 L26.5 10.5 L28.5 13 Z M24.5 20 L26.5 22.5 L28.5 20 Z" fill="#8a8a8a"/></svg>
<div class="t" style="left:213px;width:100px;text-align:center;top:938px;font-size:10px;line-height:12px;color:#d4d4d4">List Box</div>
<svg style="left:21px;top:973px" width="33" height="33" viewBox="0 0 33 33"><rect x="0" y="0" width="33" height="33" rx="5.5" fill="#ffffff"/><rect x="2.5" y="2.5" width="28" height="28" stroke="#8a8a8a" fill="none"/><path d="M7 16 L13.5 22 L25.5 10.5" stroke="#1a9be6" stroke-width="2.6" fill="none"/></svg>
<div class="t" style="left:-12px;width:100px;text-align:center;top:1012px;font-size:10px;line-height:12px;color:#d4d4d4">Checkbox</div>
<svg style="left:96px;top:973px" width="33" height="33" viewBox="0 0 33 33"><rect x="0" y="0" width="33" height="33" rx="5.5" fill="#ffffff"/><circle cx="16.5" cy="16.5" r="13.5" stroke="#8a8a8a" fill="none"/><circle cx="16.5" cy="16.5" r="5.5" fill="#1a9be6"/></svg>
<div class="t" style="left:63px;width:100px;text-align:center;top:1012px;font-size:10px;line-height:12px;color:#d4d4d4">Radio Button</div>
<div class="a" style="left:1px;top:863px;width:302px;height:1px;background:#1c1c1c"></div>
<div class="t" style="left:15px;top:874px;font-size:10px;line-height:12px;color:#8c8c8c">Default » Forms</div>
<svg style="left:88px;top:877px" width="6" height="6" viewBox="0 0 6 6"><path d="M0 0.5 H6 L3 5.5 Z" fill="#b0b0b0"/></svg>
<!-- ===== CANVAS TABS ===== -->
<div class="a" style="left:565px;top:153px;width:49px;height:21px;background:#1e1e1e"></div>
<div class="t" style="left:312px;top:158px;font-size:10px;line-height:12px;color:#9c9c9c;">Contact</div>
<svg style="left:361px;top:161px" width="7" height="7" viewBox="0 0 7 7"><path d="M0.5 0.5 L6.5 6.5 M6.5 0.5 L0.5 6.5" stroke="#9c9c9c" stroke-width="1"/></svg>
<div class="t" style="left:384px;top:158px;font-size:10px;line-height:12px;color:#9c9c9c;">Home page</div>
<svg style="left:450px;top:161px" width="7" height="7" viewBox="0 0 7 7"><path d="M0.5 0.5 L6.5 6.5 M6.5 0.5 L0.5 6.5" stroke="#9c9c9c" stroke-width="1"/></svg>
<div class="t" style="left:473px;top:158px;font-size:10px;line-height:12px;color:#9c9c9c;">PL</div>
<svg style="left:500px;top:161px" width="7" height="7" viewBox="0 0 7 7"><path d="M0.5 0.5 L6.5 6.5 M6.5 0.5 L0.5 6.5" stroke="#9c9c9c" stroke-width="1"/></svg>
<div class="t" style="left:523px;top:158px;font-size:10px;line-height:12px;color:#9c9c9c;">PL</div>
<svg style="left:550px;top:161px" width="7" height="7" viewBox="0 0 7 7"><path d="M0.5 0.5 L6.5 6.5 M6.5 0.5 L0.5 6.5" stroke="#9c9c9c" stroke-width="1"/></svg>
<div class="t" style="left:573px;top:158px;font-size:10px;line-height:12px;color:#f0f0f0;font-weight:bold;">PL</div>
<svg style="left:600px;top:161px" width="7" height="7" viewBox="0 0 7 7"><path d="M0.5 0.5 L6.5 6.5 M6.5 0.5 L0.5 6.5" stroke="#f0f0f0" stroke-width="1"/></svg>
<svg style="left:1643px;top:162px" width="10" height="6" viewBox="0 0 10 6"><path d="M0.5 0.5 H9.5 L5 5.5 Z" fill="#e8e8e8"/></svg>
<!-- ===== RULERS ===== -->
<div class="a" style="left:304px;top:174px;width:1354px;height:16px;background:#444444"></div>
<div class="a" style="left:920px;top:174px;width:360px;height:16px;background:#2a2a2a"></div>
<div class="a" style="left:304px;top:174px;width:16px;height:15px;background:#2a2a2a"></div>
<div class="a" style="left:304px;top:189px;width:1354px;height:1px;background:#a8a8a8"></div>
<div class="a" style="left:319px;top:174px;width:1px;height:15px;background:#a8a8a8"></div>
<svg style="left:305px;top:175px" width="13" height="13" viewBox="0 0 13 13"><circle cx="6.5" cy="6.5" r="4" stroke="#9a9a9a" stroke-width="1.1" fill="none"/><path d="M6.5 0.5 V12.5 M0.5 6.5 H12.5" stroke="#9a9a9a" stroke-width="1.1"/></svg>
<svg style="left:320px;top:174px" width="1338" height="15" viewBox="0 0 1338 15"><path d="M0.5 0 V15 M10.5 11 V15 M20.5 11 V15 M30.5 11 V15 M40.5 11 V15 M50.5 6 V15 M60.5 11 V15 M70.5 11 V15 M80.5 11 V15 M90.5 11 V15 M100.5 0 V15 M110.5 11 V15 M120.5 11 V15 M130.5 11 V15 M140.5 11 V15 M150.5 6 V15 M160.5 11 V15 M170.5 11 V15 M180.5 11 V15 M190.5 11 V15 M200.5 0 V15 M210.5 11 V15 M220.5 11 V15 M230.5 11 V15 M240.5 11 V15 M250.5 6 V15 M260.5 11 V15 M270.5 11 V15 M280.5 11 V15 M290.5 11 V15 M300.5 0 V15 M310.5 11 V15 M320.5 11 V15 M330.5 11 V15 M340.5 11 V15 M350.5 6 V15 M360.5 11 V15 M370.5 11 V15 M380.5 11 V15 M390.5 11 V15 M400.5 0 V15 M410.5 11 V15 M420.5 11 V15 M430.5 11 V15 M440.5 11 V15 M450.5 6 V15 M460.5 11 V15 M470.5 11 V15 M480.5 11 V15 M490.5 11 V15 M500.5 0 V15 M510.5 11 V15 M520.5 11 V15 M530.5 11 V15 M540.5 11 V15 M550.5 6 V15 M560.5 11 V15 M570.5 11 V15 M580.5 11 V15 M590.5 11 V15 M600.5 0 V15 M610.5 11 V15 M620.5 11 V15 M630.5 11 V15 M640.5 11 V15 M650.5 6 V15 M660.5 11 V15 M670.5 11 V15 M680.5 11 V15 M690.5 11 V15 M700.5 0 V15 M710.5 11 V15 M720.5 11 V15 M730.5 11 V15 M740.5 11 V15 M750.5 6 V15 M760.5 11 V15 M770.5 11 V15 M780.5 11 V15 M790.5 11 V15 M800.5 0 V15 M810.5 11 V15 M820.5 11 V15 M830.5 11 V15 M840.5 11 V15 M850.5 6 V15 M860.5 11 V15 M870.5 11 V15 M880.5 11 V15 M890.5 11 V15 M900.5 0 V15 M910.5 11 V15 M920.5 11 V15 M930.5 11 V15 M940.5 11 V15 M950.5 6 V15 M960.5 11 V15 M970.5 11 V15 M980.5 11 V15 M990.5 11 V15 M1000.5 0 V15 M1010.5 11 V15 M1020.5 11 V15 M1030.5 11 V15 M1040.5 11 V15 M1050.5 6 V15 M1060.5 11 V15 M1070.5 11 V15 M1080.5 11 V15 M1090.5 11 V15 M1100.5 0 V15 M1110.5 11 V15 M1120.5 11 V15 M1130.5 11 V15 M1140.5 11 V15 M1150.5 6 V15 M1160.5 11 V15 M1170.5 11 V15 M1180.5 11 V15 M1190.5 11 V15 M1200.5 0 V15 M1210.5 11 V15 M1220.5 11 V15 M1230.5 11 V15 M1240.5 11 V15 M1250.5 6 V15 M1260.5 11 V15 M1270.5 11 V15 M1280.5 11 V15 M1290.5 11 V15 M1300.5 0 V15 M1310.5 11 V15 M1320.5 11 V15 M1330.5 11 V15" stroke="#b4b4b4" stroke-width="1"/></svg>
<div class="t" style="left:324px;top:176px;font-size:10px;line-height:11px;color:#d4d4d4">-600</div>
<div class="t" style="left:424px;top:176px;font-size:10px;line-height:11px;color:#d4d4d4">-500</div>
<div class="t" style="left:524px;top:176px;font-size:10px;line-height:11px;color:#d4d4d4">-400</div>
<div class="t" style="left:624px;top:176px;font-size:10px;line-height:11px;color:#d4d4d4">-300</div>
<div class="t" style="left:724px;top:176px;font-size:10px;line-height:11px;color:#d4d4d4">-200</div>
<div class="t" style="left:824px;top:176px;font-size:10px;line-height:11px;color:#d4d4d4">-100</div>
<div class="t" style="left:924px;top:176px;font-size:10px;line-height:11px;color:#d4d4d4">0</div>
<div class="t" style="left:1024px;top:176px;font-size:10px;line-height:11px;color:#d4d4d4">100</div>
<div class="t" style="left:1124px;top:176px;font-size:10px;line-height:11px;color:#d4d4d4">200</div>
<div class="t" style="left:1224px;top:176px;font-size:10px;line-height:11px;color:#d4d4d4">300</div>
<div class="t" style="left:1324px;top:176px;font-size:10px;line-height:11px;color:#d4d4d4">400</div>
<div class="t" style="left:1424px;top:176px;font-size:10px;line-height:11px;color:#d4d4d4">500</div>
<div class="t" style="left:1524px;top:176px;font-size:10px;line-height:11px;color:#d4d4d4">600</div>
<div class="t" style="left:1624px;top:176px;font-size:10px;line-height:11px;color:#d4d4d4">700</div>
<div class="a" style="left:304px;top:190px;width:15px;height:848px;background:#2a2a2a"></div>
<div class="a" style="left:319px;top:190px;width:1px;height:848px;background:#a8a8a8"></div>
<svg style="left:304px;top:190px" width="15" height="848" viewBox="0 0 15 848"><path d="M10 2.5 H15 M6 12.5 H15 M10 22.5 H15 M10 32.5 H15 M10 42.5 H15 M10 52.5 H15 M0 62.5 H15 M10 72.5 H15 M10 82.5 H15 M10 92.5 H15 M10 102.5 H15 M6 112.5 H15 M10 122.5 H15 M10 132.5 H15 M10 142.5 H15 M10 152.5 H15 M0 162.5 H15 M10 172.5 H15 M10 182.5 H15 M10 192.5 H15 M10 202.5 H15 M6 212.5 H15 M10 222.5 H15 M10 232.5 H15 M10 242.5 H15 M10 252.5 H15 M0 262.5 H15 M10 272.5 H15 M10 282.5 H15 M10 292.5 H15 M10 302.5 H15 M6 312.5 H15 M10 322.5 H15 M10 332.5 H15 M10 342.5 H15 M10 352.5 H15 M0 362.5 H15 M10 372.5 H15 M10 382.5 H15 M10 392.5 H15 M10 402.5 H15 M6 412.5 H15 M10 422.5 H15 M10 432.5 H15 M10 442.5 H15 M10 452.5 H15 M0 462.5 H15 M10 472.5 H15 M10 482.5 H15 M10 492.5 H15 M10 502.5 H15 M6 512.5 H15 M10 522.5 H15 M10 532.5 H15 M10 542.5 H15 M10 552.5 H15 M0 562.5 H15 M10 572.5 H15 M10 582.5 H15 M10 592.5 H15 M10 602.5 H15 M6 612.5 H15 M10 622.5 H15 M10 632.5 H15 M10 642.5 H15 M10 652.5 H15 M0 662.5 H15 M10 672.5 H15 M10 682.5 H15 M10 692.5 H15 M10 702.5 H15 M6 712.5 H15 M10 722.5 H15 M10 732.5 H15 M10 742.5 H15 M10 752.5 H15 M0 762.5 H15 M10 772.5 H15 M10 782.5 H15 M10 792.5 H15 M10 802.5 H15 M6 812.5 H15 M10 822.5 H15 M10 832.5 H15 M10 842.5 H15" stroke="#b4b4b4" stroke-width="1"/></svg>
<div class="t" style="left:306px;top:256px;width:11px;height:18px;font-size:10px;line-height:11px;color:#d4d4d4;writing-mode:vertical-rl;transform:rotate(180deg)">700</div>
<div class="t" style="left:306px;top:356px;width:11px;height:18px;font-size:10px;line-height:11px;color:#d4d4d4;writing-mode:vertical-rl;transform:rotate(180deg)">800</div>
<div class="t" style="left:306px;top:456px;width:11px;height:18px;font-size:10px;line-height:11px;color:#d4d4d4;writing-mode:vertical-rl;transform:rotate(180deg)">900</div>
<div class="t" style="left:306px;top:556px;width:11px;height:24px;font-size:10px;line-height:11px;color:#d4d4d4;writing-mode:vertical-rl;transform:rotate(180deg)">1000</div>
<div class="t" style="left:306px;top:656px;width:11px;height:24px;font-size:10px;line-height:11px;color:#d4d4d4;writing-mode:vertical-rl;transform:rotate(180deg)">1100</div>
<div class="t" style="left:306px;top:756px;width:11px;height:24px;font-size:10px;line-height:11px;color:#d4d4d4;writing-mode:vertical-rl;transform:rotate(180deg)">1200</div>
<div class="t" style="left:306px;top:856px;width:11px;height:24px;font-size:10px;line-height:11px;color:#d4d4d4;writing-mode:vertical-rl;transform:rotate(180deg)">1300</div>
<div class="t" style="left:306px;top:956px;width:11px;height:24px;font-size:10px;line-height:11px;color:#d4d4d4;writing-mode:vertical-rl;transform:rotate(180deg)">1400</div>
<!-- ===== PAGE CONTENT ===== -->
<div class="a" style="left:920px;top:190px;width:360px;height:848px;overflow:hidden;background:#ffffff">
<div class="a" style="left:20px;top:-16.599999999999994px;font-size:14px;line-height:22px;color:#6e6e6e;white-space:nowrap">Owczarek średni, takie jak np. Chow chow, Golden retriever,</div>
<div class="a" style="left:20px;top:5.400000000000006px;font-size:14px;line-height:22px;color:#6e6e6e;white-space:nowrap">Owczarek niemiecki, Husky, czy Owczarek szkocki,<br>poprzez rasy średnie - różnego typu Sznaucery,<br>Terriery i Spaniele, do ras małych takich jak<br>Yorkshire terrier, Shih tzu, Maltańczyk.<br>Miłe widziane są także pieski nie rasowe - w typie<br>danej rasy.</div>
<div class="a" style="left:20px;top:157.6px;font-size:24px;line-height:30px;font-weight:bold;color:#363636;white-space:nowrap">Czym się zajmujemy</div>
<div class="a" style="left:22px;top:187px;width:33px;height:3px;background:#d0141e"></div>
<div class="a" style="left:20px;top:214.5px;font-size:14px;line-height:22px;color:#6e6e6e;white-space:nowrap">Prawie każdy pies może odwiedzić salon strzyżenia<br>psów, zarówno psy rasowe, w typie rasy lub<br>bezrasowe. W zależności od rodzaju włosa pies<br>będzie trymowany, strzyżony nożyczkami lub<br>maszynką do strzyżenia. Podczas każdej wizyty<br>piesek będzie dwukrotnie wykąpany w<br>odpowiednim do sierści szamponie, a w przypadku<br>raz z długim włosem będą dodatkowo użyte<br>odżywki i olejki poprawiające kondycje włosa,<br>ułatwiające rozczesywanie. Obetniemy także<br>paznokcie w razie potrzeby oraz wyczyścimy uszy.</div>
<div class="a" style="left:20px;top:486.9px;font-size:24px;line-height:30px;font-weight:bold;color:#363636;white-space:nowrap">Wskazówki przed wizytą</div>
<div class="a" style="left:22px;top:516px;width:33px;height:3px;background:#d0141e"></div>
<div class="a" style="left:53px;top:543.3px;font-size:14px;line-height:22px;color:#6e6e6e;white-space:nowrap">Nie karm pupila przed wizytą<br>Wyprowadź go na krótki spacer - siusiu, kupa<br>Jeśli pupil jest agresywny lub ma miejsca w<br>których nie lubi być dotykany, <span style="font-weight:bold;color:#333333;text-decoration:underline">proszę</span><br><span style="font-weight:bold;color:#333333;text-decoration:underline">powiadom nas o tym</span><br>Po przebytej chorobie, operacji wstrzymaj się<br>minimum 14 dni z wizytą</div>
<div class="a" style="left:40px;top:549.5px;width:3px;height:3px;border-radius:50%;background:#444"></div>
<div class="a" style="left:40px;top:571.5px;width:3px;height:3px;border-radius:50%;background:#444"></div>
<div class="a" style="left:40px;top:593.5px;width:3px;height:3px;border-radius:50%;background:#444"></div>
<div class="a" style="left:40px;top:659.5px;width:3px;height:3px;border-radius:50%;background:#444"></div>
<div class="a" style="left:20px;top:722.5px;font-size:14px;line-height:22px;color:#6e6e6e;white-space:nowrap">Zachęcam do umówienia się na wizytę już od 7<br>tygodnia życia szczeniaka gdyż jest to najlepszy<br>okres na naukę pieska o prawidłowym zachowaniu<br>w salonie. Wszystko, co piesek zapamięta będzie<br>rzutować na przyszłość i sprawi, że każda wizyta<br>będzie kojarzona z czymś przyjemnym.</div>
</div>
<div class="a" style="left:940px;top:174px;width:1px;height:864px;background:#3bb3bd"></div>
<div class="a" style="left:1100px;top:174px;width:1px;height:864px;background:#3bb3bd"></div>
<div class="a" style="left:1260px;top:174px;width:1px;height:864px;background:#3bb3bd"></div>
<div class="a" style="left:303px;top:292px;width:1355px;height:1px;background:repeating-linear-gradient(90deg,#5c1e62 0 9px,transparent 9px 13px)"></div>
<div class="a" style="left:1648px;top:587px;width:9px;height:80px;border-radius:5px;background:#a2a2a2;border:1px solid #3a3a3a"></div>
<div class="a" style="left:929px;top:1028px;width:80px;height:9px;border-radius:5px;background:rgba(150,150,150,0.85);border:1px solid #3a3a3a"></div>
<!-- ===== RIGHT PANEL ===== -->
<div class="a" style="left:1659px;top:153px;width:260px;height:36px;background:#2e2e2e"></div>
<div class="a" style="left:1659px;top:189px;width:260px;height:1px;background:#1e1e1e"></div>
<div class="t" style="left:1673px;top:167px;font-size:11.5px;line-height:14px;font-weight:bold;color:#1a9be6">STYLE</div>
<div class="a" style="left:1673px;top:186px;width:37px;height:3px;background:#1a9be6"></div>
<div class="t" style="left:1744px;top:167px;font-size:11.5px;line-height:14px;color:#d8d8d8">INTERACTIONS</div>
<div class="t" style="left:1865px;top:167px;font-size:11.5px;line-height:14px;color:#d8d8d8">NOTES</div>
<div class="t" style="left:1674px;top:204px;font-size:9.7px;line-height:12px;color:#9a9a9a">PAGE DIMENSIONS</div>
<div class="t" style="left:1674px;top:231px;font-size:14px;line-height:16px;color:#e0e0e0;white-space:pre">Galaxy S9  (360 x 740)</div>
<svg style="left:1895px;top:232px" width="9" height="14" viewBox="0 0 9 14"><path d="M1 5 L4.5 1.5 L8 5 M1 9 L4.5 12.5 L8 9" stroke="#d8d8d8" stroke-width="1.4" fill="none"/></svg>
<div class="a" style="left:1674px;top:250px;width:229px;height:1px;background:#8a8a8a"></div>
<div class="t" style="left:1674px;top:268px;font-size:14px;line-height:16px;color:#e0e0e0">360</div>
<div class="a" style="left:1674px;top:287px;width:86px;height:1px;background:#6a6a6a"></div>
<div class="t" style="left:1761px;top:272px;font-size:9px;line-height:11px;font-weight:bold;color:#9a9a9a">W</div>
<div class="t" style="left:1778px;top:268px;font-size:14px;line-height:16px;color:#e0e0e0">740</div>
<div class="a" style="left:1778px;top:287px;width:87px;height:1px;background:#6a6a6a"></div>
<div class="t" style="left:1866px;top:272px;font-size:9px;line-height:11px;font-weight:bold;color:#9a9a9a">H</div>
<svg style="left:1886px;top:271px" width="17" height="12" viewBox="0 0 17 12"><path d="M0.5 11.5 V6.5 H6.5 V11.5 Z M9.5 11.5 V0.5 H16.5 V11.5 H9.5 M6.5 11.5 H9.5" stroke="#9a9a9a" fill="none"/></svg>
<div class="t" style="left:1674px;top:307px;font-size:12.5px;line-height:14px;color:#d8d8d8;text-decoration:underline">Add Adaptive Views</div>
<div class="a" style="left:1659px;top:345px;width:260px;height:1px;background:#1c1c1c"></div>
<div class="t" style="left:1674px;top:357px;font-size:18.7px;line-height:21px;color:#e0e0e0">Default</div>
<svg style="left:1886px;top:360px" width="17" height="15" viewBox="0 0 17 15"><path d="M0 1 H9 M0 4.5 H7 M0 8 H4 M0 11 H4 M0 14 H9" stroke="#9a9a9a" stroke-width="1"/><path d="M6.5 12 L7.5 9 L14 2.5 L16 4.5 L9.5 11 Z" stroke="#9a9a9a" stroke-width="1" fill="none"/></svg>
<div class="a" style="left:1659px;top:390px;width:260px;height:1px;background:#1c1c1c"></div>
<div class="t" style="left:1674px;top:404px;font-size:9.7px;line-height:12px;color:#9a9a9a">PAGE ALIGN</div>
<svg style="left:1761px;top:407px" width="15" height="11" viewBox="0 0 15 11"><path d="M0 1 H14 M0 5.5 H9 M0 10 H14" stroke="#6a6a6a" stroke-width="1.3"/></svg>
<svg style="left:1784px;top:407px" width="15" height="11" viewBox="0 0 15 11"><path d="M0 1 H14 M3 5.5 H11 M0 10 H14" stroke="#6a6a6a" stroke-width="1.3"/></svg>
<div class="a" style="left:1659px;top:432px;width:260px;height:1px;background:#1c1c1c"></div>
<div class="t" style="left:1674px;top:446px;font-size:9.7px;line-height:12px;color:#9a9a9a">FILL</div>
<div class="a" style="left:1758px;top:448px;width:32px;height:21px;border:1.5px solid #d8d8d8;border-radius:3px;background:#272727;padding:2px"><div style="width:100%;height:100%;background:#ffffff"></div></div>
<div class="t" style="left:1754px;top:472px;width:40px;text-align:center;font-size:10px;line-height:12px;color:#d0d0d0">Color</div>
<div class="a" style="left:1815px;top:448px;width:32px;height:21px;border:1.5px solid #d8d8d8;border-radius:3px;background:#272727;padding:2px"><svg style="position:static" width="25" height="14" viewBox="0 0 25 14"><rect width="25" height="14" fill="#fff"/><path d="M0 14 L25 0" stroke="#555" stroke-width="1"/></svg></div>
<div class="t" style="left:1811px;top:472px;width:40px;text-align:center;font-size:10px;line-height:12px;color:#d0d0d0">Image</div>
<div class="t" style="left:1674px;top:510px;font-size:9.7px;line-height:12px;color:#9a9a9a">LOW FIDELITY</div>
<div class="a" style="left:1758px;top:510px;width:35px;height:29px;border:1px solid #8a8a8a;border-radius:3px"></div>
<svg style="left:1763px;top:514px" width="25" height="20" viewBox="0 0 25 20"><rect x="0.5" y="0.5" width="24" height="19" stroke="#9a9a9a" fill="none"/><path d="M2 17 V12 L8 7.5 L12 11 L17 8 L23 12 V17 Z" fill="#c0c0c0"/><circle cx="18" cy="5.5" r="2" fill="#cfcfcf"/></svg>
<div class="t" style="left:1818px;top:511px;font-size:10px;line-height:14px;color:#d8d8d8">Reduce visual fidelity<br>to focus on UX</div>
<!-- ===== TASKBAR ===== -->
<div class="a" style="left:149px;top:1040px;width:48px;height:40px;background:#3a3a3a"></div>
<div class="a" style="left:55px;top:1078px;width:40px;height:2px;background:#76b9ed"></div>
<div class="a" style="left:104px;top:1078px;width:40px;height:2px;background:#76b9ed"></div>
<div class="a" style="left:149px;top:1078px;width:48px;height:2px;background:#76b9ed"></div>
<div class="a" style="left:202px;top:1078px;width:40px;height:2px;background:#76b9ed"></div>
<div class="a" style="left:251px;top:1078px;width:40px;height:2px;background:#76b9ed"></div>
<svg style="left:16px;top:1052px" width="17" height="17" viewBox="0 0 17 17"><path d="M0 2.4 L7 1.4 V8 H0 Z M8 1.2 L17 0 V8 H8 Z M0 9 H7 V15.6 L0 14.6 Z M8 9 H17 V17 L8 15.8 Z" fill="#ffffff"/></svg>
<svg style="left:64px;top:1049px" width="22" height="22" viewBox="0 0 24 24"><path d="M12 12 L2.474 6.5 A11 11 0 0 1 21.526 6.5 Z" fill="#db4437"/><path d="M12 12 L21.526 6.5 A11 11 0 0 1 12 23 Z" fill="#fcc934"/><path d="M12 12 L12 23 A11 11 0 0 1 2.474 6.5 Z" fill="#1ea362"/><circle cx="12" cy="12" r="5.4" fill="#ffffff"/><circle cx="12" cy="12" r="4.3" fill="#4a8af4"/></svg>
<svg style="left:113px;top:1050px" width="22" height="22" viewBox="0 0 22 22"><path d="M3 1 H19 A3 3 0 0 1 22 4 V22 L18 18 H3 A3 3 0 0 1 0 15 V4 A3 3 0 0 1 3 1 Z" fill="#7289da"/><ellipse cx="11" cy="10.5" rx="6" ry="3.5" fill="#ffffff"/><circle cx="8.5" cy="10.5" r="1.3" fill="#7289da"/><circle cx="13.5" cy="10.5" r="1.3" fill="#7289da"/></svg>
<div class="a" style="left:162px;top:1048px;width:23px;height:23px;border-radius:3px;background:#f4f4f4"></div>
<svg style="left:165px;top:1052px" width="17" height="16" viewBox="0 0 17 16"><path d="M3 1 L9 8 L3 15" stroke="#29a8e0" stroke-width="2" fill="none"/><path d="M10.5 5.5 L13 2" stroke="#8dc63f" stroke-width="2"/><path d="M10.5 10 L13 13.5" stroke="#e0287a" stroke-width="2"/></svg>
<svg style="left:213px;top:1048px" width="19" height="24" viewBox="0 0 19 24"><rect x="0" y="0" width="19" height="24" fill="#ffffff"/><rect x="2" y="2" width="15" height="4" fill="#111"/><path d="M3 9 H6 M8 9 H11 M13 9 H16 M3 13 H6 M8 13 H11 M13 13 H16 M3 17 H6 M8 17 H11 M13 17 H16 M3 21 H6 M8 21 H11 M13 21 H16" stroke="#111" stroke-width="2"/></svg>
<svg style="left:258px;top:1048px" width="25" height="24" viewBox="0 0 25 24"><path d="M2 13 C0 6 8 2 14 4 C19 6 19 10 16 12 C14 13 15 16 13 18 C10 22 4 20 2 13 Z" fill="#cfe4f0"/><circle cx="6" cy="10" r="1.6" fill="#e04040"/><circle cx="9" cy="7" r="1.6" fill="#40b040"/><circle cx="13" cy="7" r="1.6" fill="#f0c030"/><circle cx="5" cy="15" r="1.6" fill="#3060d0"/><path d="M11 21 L22 3" stroke="#e8a040" stroke-width="2.2"/><path d="M20.5 2 L23.5 0.5 L22.5 4 Z" fill="#c07020"/></svg>
<svg style="left:1734px;top:1055px" width="12" height="7" viewBox="0 0 12 7"><path d="M0.5 6.5 L6 1 L11.5 6.5" stroke="#e0e0e0" stroke-width="1.1" fill="none"/></svg>
<svg style="left:1757px;top:1053px" width="17" height="16" viewBox="0 0 17 16"><rect x="3.5" y="1.5" width="13" height="9" stroke="#e0e0e0" fill="none"/><path d="M10 10.5 V13 M7 13.5 H13 M3 0.5 V15 M0.5 0.5 H3 M0.5 0.5 V4 H3" stroke="#e0e0e0" fill="none"/></svg>
<svg style="left:1780px;top:1052px" width="17" height="17" viewBox="0 0 17 17"><path d="M1 6 H4 L8 2 V15 L4 11 H1 Z" stroke="#e0e0e0" fill="none"/><path d="M10.5 5.5 C12 7 12 10 10.5 11.5 M12.5 3.5 C15 6 15 11 12.5 13.5 M14.5 1.5 C18 5 18 12 14.5 15.5" stroke="#e0e0e0" fill="none"/></svg>
<div class="t" style="left:1794px;top:1045px;width:80px;text-align:center;font-size:11.5px;line-height:13px;color:#ffffff">18:19</div>
<div class="t" style="left:1794px;top:1062px;width:80px;text-align:center;font-size:11.5px;line-height:13px;color:#ffffff">13.04.2020</div>
<svg style="left:1879px;top:1051px" width="22" height="22" viewBox="0 0 22 22"><path d="M0 0 H16 V13 H8 L5 16 V13 H0 Z" fill="#ffffff"/><path d="M3 3.5 H13 M3 6.5 H13 M3 9.5 H10" stroke="#202020" stroke-width="1"/><circle cx="14" cy="14" r="7" fill="#2a2a2a" stroke="#a0a0a0" stroke-width="1"/><path d="M13 11 L15 10 V18" stroke="#ffffff" stroke-width="1.6" fill="none"/></svg>
<div class="a" style="left:1915px;top:1040px;width:1px;height:40px;background:#6a6a6a"></div>
</body></html>
